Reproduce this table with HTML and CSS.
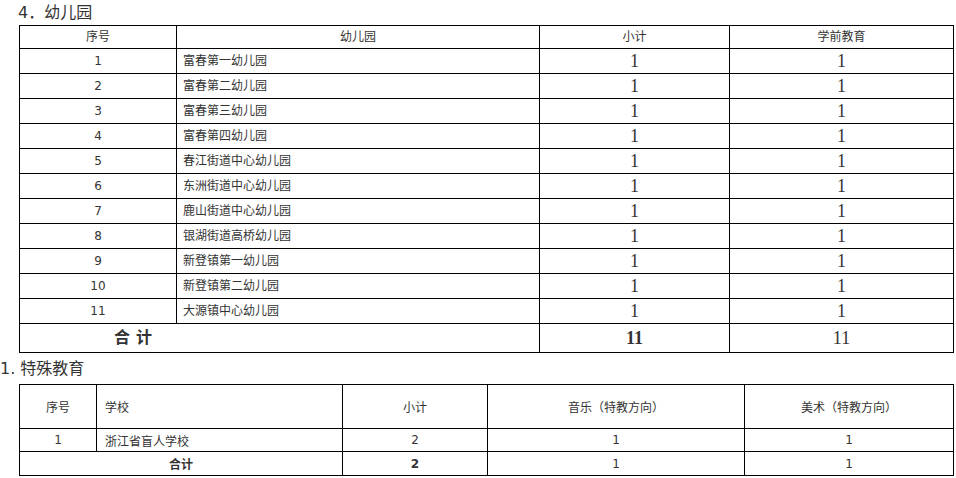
FILE: index.html
```html
<!DOCTYPE html>
<html lang="zh-CN">
<head>
<meta charset="utf-8">
<title>幼儿园 / 特殊教育</title>
<link rel="stylesheet" href="styles.css">
</head>
<body>
<h2 class="title t1">4．幼儿园</h2>
<table class="grid g1">
  <colgroup><col class="c1"><col class="c2"><col class="c3"><col class="c4"></colgroup>
  <thead>
    <tr class="head"><td>序号</td><td>幼儿园</td><td>小计</td><td>学前教育</td></tr>
  </thead>
  <tbody>
    <tr><td class="seq">1</td><td class="name">富春第一幼儿园</td><td class="num">1</td><td class="num">1</td></tr>
    <tr><td class="seq">2</td><td class="name">富春第二幼儿园</td><td class="num">1</td><td class="num">1</td></tr>
    <tr><td class="seq">3</td><td class="name">富春第三幼儿园</td><td class="num">1</td><td class="num">1</td></tr>
    <tr><td class="seq">4</td><td class="name">富春第四幼儿园</td><td class="num">1</td><td class="num">1</td></tr>
    <tr><td class="seq">5</td><td class="name">春江街道中心幼儿园</td><td class="num">1</td><td class="num">1</td></tr>
    <tr><td class="seq">6</td><td class="name">东洲街道中心幼儿园</td><td class="num">1</td><td class="num">1</td></tr>
    <tr><td class="seq">7</td><td class="name">鹿山街道中心幼儿园</td><td class="num">1</td><td class="num">1</td></tr>
    <tr><td class="seq">8</td><td class="name">银湖街道高桥幼儿园</td><td class="num">1</td><td class="num">1</td></tr>
    <tr><td class="seq">9</td><td class="name">新登镇第一幼儿园</td><td class="num">1</td><td class="num">1</td></tr>
    <tr><td class="seq">10</td><td class="name">新登镇第二幼儿园</td><td class="num">1</td><td class="num">1</td></tr>
    <tr><td class="seq">11</td><td class="name">大源镇中心幼儿园</td><td class="num">1</td><td class="num">1</td></tr>
    <tr class="total"><td colspan="2" class="total-label">合计</td><td class="num bold">11</td><td class="num">11</td></tr>
  </tbody>
</table>
<h2 class="title t2">1. 特殊教育</h2>
<table class="grid g2">
  <colgroup><col class="d1"><col class="d2"><col class="d3"><col class="d4"><col class="d5"></colgroup>
  <tbody>
    <tr class="head2"><td>序号</td><td class="left">学校</td><td>小计</td><td>音乐（特教方向）</td><td>美术（特教方向）</td></tr>
    <tr class="row2"><td>1</td><td class="left">浙江省盲人学校</td><td>2</td><td>1</td><td>1</td></tr>
    <tr class="row3"><td colspan="2" class="bold">合计</td><td class="bold">2</td><td>1</td><td>1</td></tr>
  </tbody>
</table>
</body>
</html>
```
FILE: styles.css
```css
html, body {
  margin: 0;
  padding: 0;
  background: #fff;
}
body {
  color: #333;
  font-family: "DejaVu Sans", "Noto Sans CJK SC", sans-serif;
  font-size: 12px;
}
.title {
  margin: 0;
  font-weight: normal;
  font-size: 16px;
  color: #333;
  font-family: "DejaVu Sans", "Noto Sans CJK SC", sans-serif;
}
.t1 {
  height: 25px;
  line-height: 25px;
  padding-left: 18px;
}
.t2 {
  height: 31px;
  line-height: 32px;
  padding-left: 0;
}
.grid {
  border-collapse: collapse;
  table-layout: fixed;
  margin-left: 19px;
  width: 934px;
}
.grid td {
  border: 1px solid #000;
  padding: 0;
  text-align: center;
  vertical-align: middle;
  color: #333;
}
.g1 .c1 { width: 157px; }
.g1 .c2 { width: 363px; }
.g1 .c3 { width: 190px; }
.g1 .c4 { width: 224px; }
.g1 .head td { height: 22px; line-height: 22px; }
.g1 tbody tr td { height: 24px; line-height: 24px; }
.g1 td.name { text-align: left; padding-left: 6px; }
.g1 td.num {
  font-family: "Liberation Serif", serif;
  font-size: 18px;
}
.g1 tr.total td { height: 28px; line-height: 28px; }
.g1 td.total-label {
  text-align: left;
  padding-left: 94px;
  font-size: 16px;
  font-weight: bold;
  letter-spacing: 6px;
}
.bold { font-weight: bold; }
.g2 .d1 { width: 77px; }
.g2 .d2 { width: 246px; }
.g2 .d3 { width: 145px; }
.g2 .d4 { width: 257px; }
.g2 .d5 { width: 209px; }
.g2 td.left { text-align: left; padding-left: 8px; }
.g2 .head2 td { height: 43px; }
.g2 .row2 td { height: 22px; }
.g2 .row3 td { height: 23px; }
```
